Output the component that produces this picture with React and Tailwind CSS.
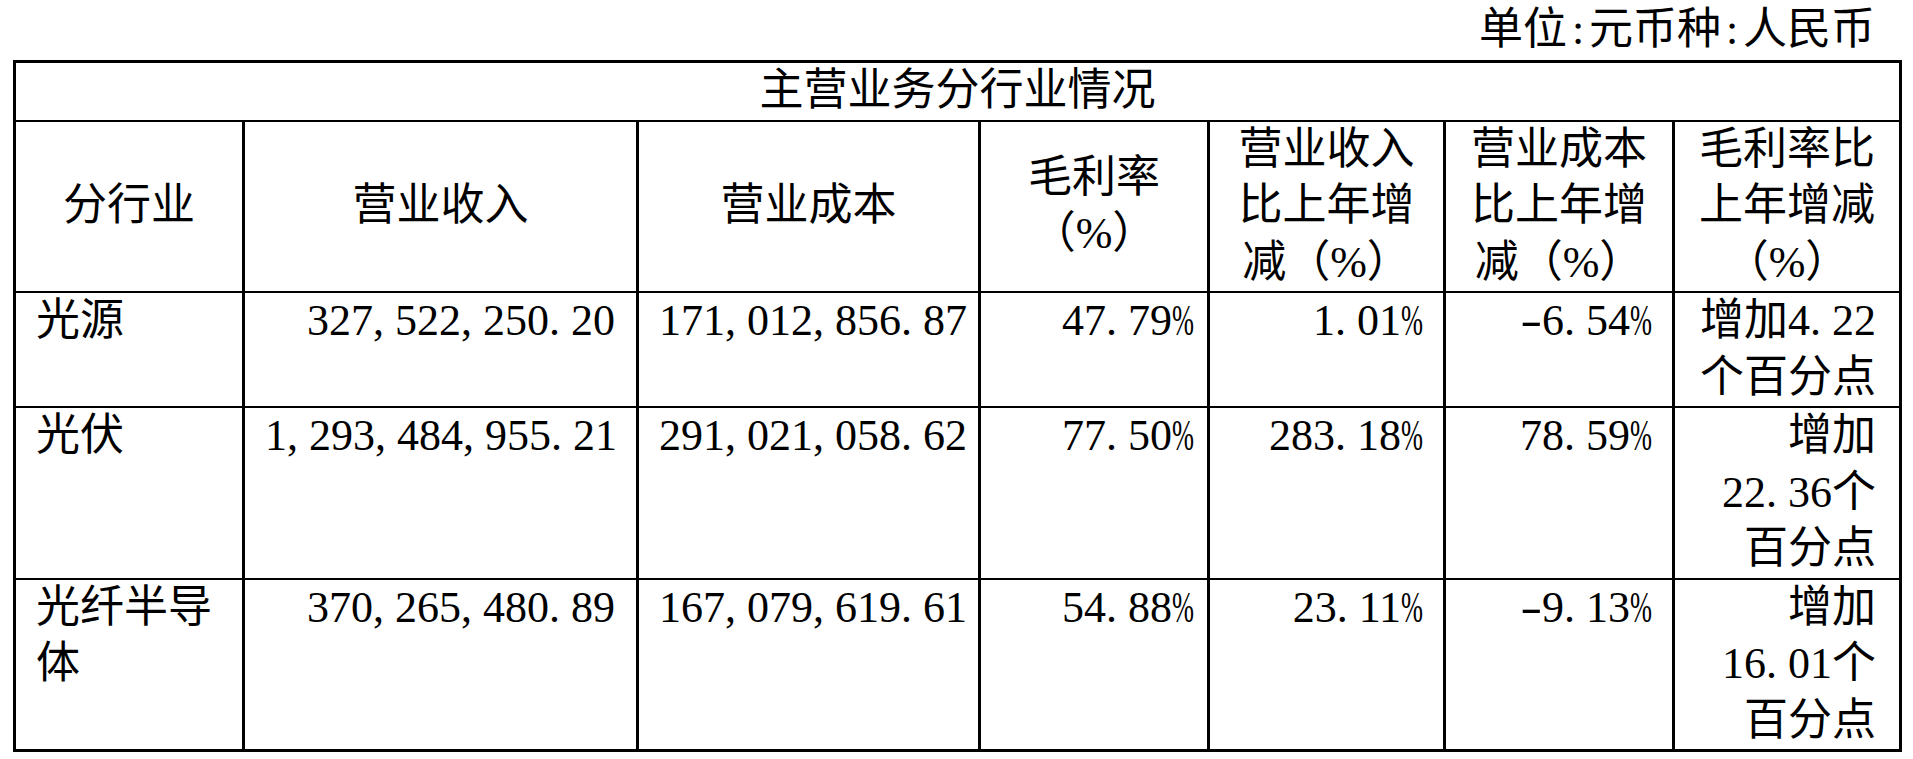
import React from "react";

// figures copied from the annual report table, strings kept as printed
const rows = [
  {
    name: "光源",
    revenue: "327,522,250.20",
    cost: "171,012,856.87",
    margin: "47.79%",
    revenueYoY: "1.01%",
    costYoY: "-6.54%",
    marginChange: "4.22",
  },
  {
    name: "光伏",
    revenue: "1,293,484,955.21",
    cost: "291,021,058.62",
    margin: "77.50%",
    revenueYoY: "283.18%",
    costYoY: "78.59%",
    marginChange: "22.36",
  },
  {
    name: "光纤半导体",
    revenue: "370,265,480.89",
    cost: "167,079,619.61",
    margin: "54.88%",
    revenueYoY: "23.11%",
    costYoY: "-9.13%",
    marginChange: "16.01",
  },
];

const Pct = () => (
  <span className="inline-block w-[0.5em]">
    <span className="inline-block origin-left scale-x-[0.6]">%</span>
  </span>
);

const Num = ({ value }) => (
  <span className="whitespace-nowrap">
    {value.split("").map((ch, i) => {
      if (ch === "," || ch === ".")
        return (
          <span key={i} className="inline-block w-[0.5em] text-left">
            {ch}
          </span>
        );
      if (ch === "-")
        return (
          <span key={i} className="inline-block w-[0.5em] text-center">
            <span className="inline-block scale-x-[1.5]">-</span>
          </span>
        );
      if (ch === "%") return <Pct key={i} />;
      return ch;
    })}
  </span>
);

const Paren = () => <span className="whitespace-nowrap">（%）</span>;

const th =
  "border-x-[3px] border-y-2 border-black px-[20px] text-center align-middle font-normal";
const td = "border-x-[3px] border-y-2 border-black pl-[20px] align-top";

export default function App() {
  return (
    <div
      className="min-h-screen bg-white text-black text-[44px] leading-[56.5px]"
      style={{ fontFamily: '"Liberation Serif", "Noto Sans CJK SC", serif' }}
    >
      <div className="h-[60px] pr-[38px] text-right leading-[60px]">
        单位
        <span className="inline-block w-[22px] text-center">:</span>
        元币种
        <span className="inline-block w-[22px] text-center">:</span>
        人民币
      </div>

      <table className="ml-[13px] w-[1886px] table-fixed border-collapse border-[3px] border-black">
        <colgroup>
          <col className="w-[229px]" />
          <col className="w-[394px]" />
          <col className="w-[342px]" />
          <col className="w-[229px]" />
          <col className="w-[236px]" />
          <col className="w-[229px]" />
          <col className="w-[227px]" />
        </colgroup>
        <thead>
          <tr>
            <th colSpan={7} className={th}>
              主营业务分行业情况
            </th>
          </tr>
          <tr className="h-[170px]">
            <th className={th}>分行业</th>
            <th className={th}>营业收入</th>
            <th className={th}>营业成本</th>
            <th className={th}>
              毛利率
              <Paren />
            </th>
            <th className={th}>
              营业收入比上年增减
              <Paren />
            </th>
            <th className={th}>
              营业成本比上年增减
              <Paren />
            </th>
            <th className={th}>
              毛利率比上年增减
              <Paren />
            </th>
          </tr>
        </thead>
        <tbody>
          {rows.map((r) => (
            <tr key={r.name}>
              <td className={`${td} pr-[20px] text-left`}>{r.name}</td>
              <td className={`${td} pr-[21px] text-right`}>
                <Num value={r.revenue} />
              </td>
              <td className={`${td} pr-[13px] text-right`}>
                <Num value={r.cost} />
              </td>
              <td className={`${td} pr-[13px] text-right`}>
                <Num value={r.margin} />
              </td>
              <td className={`${td} pr-[20px] text-right`}>
                <Num value={r.revenueYoY} />
              </td>
              <td className={`${td} pr-[20px] text-right`}>
                <Num value={r.costYoY} />
              </td>
              <td className={`${td} pr-[23px] text-right`}>
                增加
                <Num value={r.marginChange} />
                个百分点
              </td>
            </tr>
          ))}
        </tbody>
      </table>
    </div>
  );
}
